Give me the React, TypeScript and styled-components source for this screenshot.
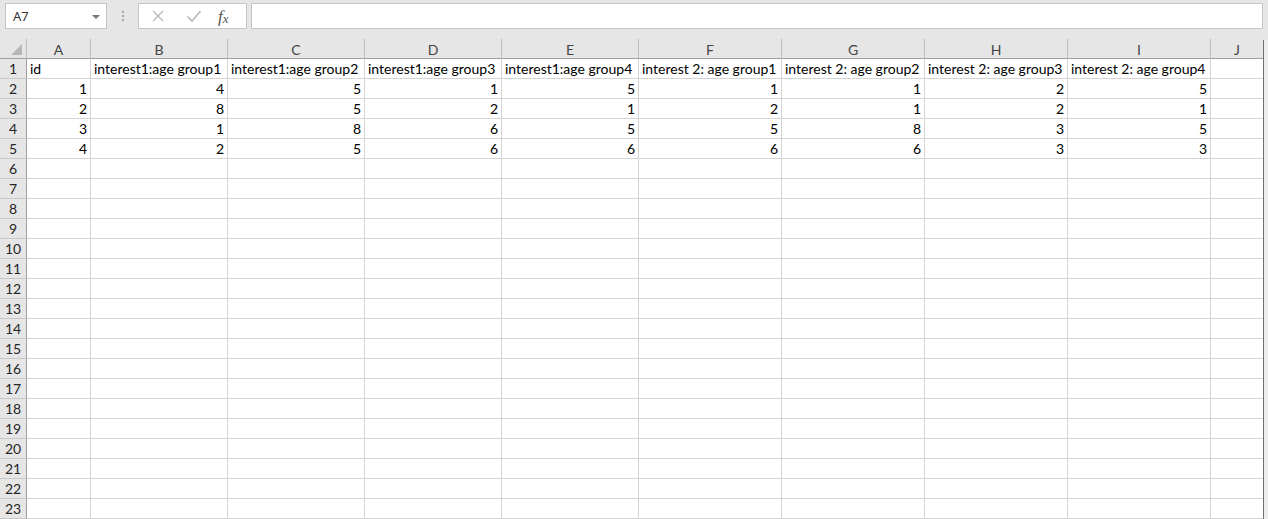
import React from "react"
import styled, { createGlobalStyle } from "styled-components"

const COLS = ["A", "B", "C", "D", "E", "F", "G", "H", "I", "J"]
const WIDTHS = [64, 137, 137, 137, 137, 143, 143, 143, 143, 52]

const HEAD = [
  "id",
  "interest1:age group1",
  "interest1:age group2",
  "interest1:age group3",
  "interest1:age group4",
  "interest 2: age group1",
  "interest 2: age group2",
  "interest 2: age group3",
  "interest 2: age group4",
]

const DATA = [
  [1, 4, 5, 1, 5, 1, 1, 2, 5],
  [2, 8, 5, 2, 1, 2, 1, 2, 1],
  [3, 1, 8, 6, 5, 5, 8, 3, 5],
  [4, 2, 5, 6, 6, 6, 6, 3, 3],
]

const ROW_COUNT = 23

const GlobalStyle = createGlobalStyle`
  html, body {
    margin: 0;
    padding: 0;
    background: #e6e6e6;
    overflow: hidden;
  }
  body {
    font-family: "Lato", "Liberation Sans", sans-serif;
  }
`

const App: React.FC = () => {
  const rows: (string | number | undefined)[][] = [HEAD, ...DATA]

  return (
    <Page>
      <GlobalStyle />
      <Toolbar>
        <NameBox>
          <NameText>A7</NameText>
          <DropArrow />
        </NameBox>
        <Grip>
          <Dot />
          <Dot />
          <Dot />
        </Grip>
        <ButtonBox>
          <IconSlot>
            <svg width="14" height="14" viewBox="0 0 14 14">
              <path d="M2 2 L12 12 M12 2 L2 12" stroke="#b9b9b9" strokeWidth="1.4" fill="none" />
            </svg>
          </IconSlot>
          <IconSlot>
            <svg width="16" height="14" viewBox="0 0 16 14">
              <path d="M1.5 7.5 L6 12 L14.5 2" stroke="#b9b9b9" strokeWidth="1.6" fill="none" />
            </svg>
          </IconSlot>
          <Fx>
            f<sub>x</sub>
          </Fx>
        </ButtonBox>
        <FormulaInput />
      </Toolbar>

      <Sheet>
        <Grid>
          <Corner>
            <CornerMark />
          </Corner>
          {COLS.map((c, i) => (
            <ColHead key={c} $last={i === COLS.length - 1}>
              {c}
            </ColHead>
          ))}
          {Array.from({ length: ROW_COUNT }, (_, r) => (
            <React.Fragment key={r}>
              <RowHead>{r + 1}</RowHead>
              {COLS.map((c, ci) => {
                const v = rows[r]?.[ci]
                return (
                  <Cell
                    key={c}
                    $num={typeof v === "number"}
                    $last={ci === COLS.length - 1}
                  >
                    {v}
                  </Cell>
                )
              })}
            </React.Fragment>
          ))}
        </Grid>
        <EdgeBar />
      </Sheet>
    </Page>
  )
}

export default App

const Page = styled.div`
  width: 1268px;
  height: 519px;
  background: #e6e6e6;
  overflow: hidden;
`

const Toolbar = styled.div`
  display: flex;
  align-items: flex-start;
  height: 39px;
  padding: 3px 0 0 5px;
  box-sizing: border-box;
`

const NameBox = styled.div`
  display: flex;
  align-items: center;
  justify-content: space-between;
  width: 102px;
  height: 26px;
  box-sizing: border-box;
  border: 1px solid #c6c6c6;
  background: #fff;
  padding: 0 6px 0 7px;
`

const NameText = styled.span`
  font-family: "Noto Sans", "Open Sans", sans-serif;
  font-size: 13px;
  color: #333;
`

const DropArrow = styled.span`
  width: 0;
  height: 0;
  border-left: 4px solid transparent;
  border-right: 4px solid transparent;
  border-top: 4px solid #777;
  margin-top: 1px;
`

const Grip = styled.div`
  display: flex;
  flex-direction: column;
  align-items: center;
  justify-content: center;
  gap: 2px;
  width: 31px;
  height: 26px;
`

const Dot = styled.span`
  width: 2px;
  height: 2px;
  background: #a8a8a8;
`

const ButtonBox = styled.div`
  display: flex;
  align-items: center;
  width: 109px;
  height: 26px;
  box-sizing: border-box;
  border: 1px solid #c6c6c6;
  background: #fff;
  padding: 0 0 0 11px;
`

const IconSlot = styled.span`
  display: flex;
  align-items: center;
  justify-content: center;
  width: 16px;
  height: 16px;
  margin-right: 20px;
`

const Fx = styled.span`
  font-family: "Liberation Serif", "DejaVu Serif", serif;
  font-style: italic;
  font-size: 17px;
  color: #555;
  margin-left: -4px;
  line-height: 1;

  sub {
    font-size: 13px;
    vertical-align: -1px;
  }
`

const FormulaInput = styled.div`
  flex: none;
  margin-left: 4px;
  width: 1012px;
  height: 26px;
  box-sizing: border-box;
  border: 1px solid #c6c6c6;
  background: #fff;
`

const Sheet = styled.div`
  display: flex;
  height: 480px;
`

const Grid = styled.div`
  display: grid;
  grid-template-columns: 27px ${WIDTHS.map((w) => `${w}px`).join(" ")};
  grid-template-rows: 20px;
  grid-auto-rows: 20px;
  background: #fff;
`

const Corner = styled.div`
  position: relative;
  background: #e6e6e6;
  border-right: 1px solid #bdbdbd;
  border-bottom: 1px solid #9e9e9e;
  box-sizing: border-box;
`

const CornerMark = styled.span`
  position: absolute;
  right: 4px;
  bottom: 3px;
  width: 0;
  height: 0;
  border-left: 11px solid transparent;
  border-bottom: 11px solid #b6b6b6;
`

const ColHead = styled.div<{ $last?: boolean }>`
  display: flex;
  align-items: center;
  justify-content: center;
  background: #e6e6e6;
  border-right: ${(p) => (p.$last ? "none" : "1px solid #bdbdbd")};
  border-bottom: 1px solid #9e9e9e;
  box-sizing: border-box;
  font-size: 14px;
  color: #444;
  padding-top: 1px;
`

const RowHead = styled.div`
  display: flex;
  align-items: flex-end;
  justify-content: center;
  background: #e6e6e6;
  border-right: 1px solid #9e9e9e;
  border-bottom: 1px solid #c8c8c8;
  box-sizing: border-box;
  font-size: 14px;
  line-height: 19px;
  color: #262626;
`

const Cell = styled.div<{ $num?: boolean; $last?: boolean }>`
  display: flex;
  align-items: flex-end;
  justify-content: ${(p) => (p.$num ? "flex-end" : "flex-start")};
  border-right: ${(p) => (p.$last ? "none" : "1px solid #d4d4d4")};
  border-bottom: 1px solid #d4d4d4;
  box-sizing: border-box;
  padding: 0 3px;
  font-size: 14px;
  line-height: 19px;
  color: #000;
  white-space: nowrap;
  overflow: visible;
`

const EdgeBar = styled.div`
  flex: 1;
  margin-top: 1px;
  border-left: 1px solid #707070;
  background: #ececec;
`
